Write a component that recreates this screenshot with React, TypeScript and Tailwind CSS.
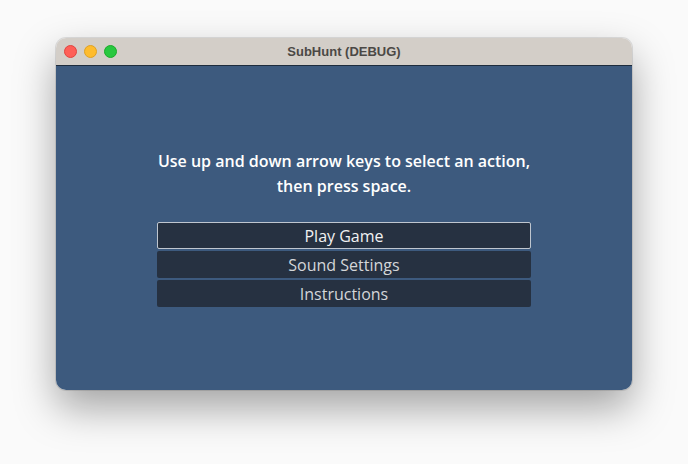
const actions = ['Play Game', 'Sound Settings', 'Instructions'];

export default function App() {
  const selected = 0;

  return (
    <div className="w-[688px] h-[464px] bg-[#fafafa] pt-[38px] pl-[56px]">
      <div className="w-[576px] h-[352px] rounded-[10px] overflow-hidden flex flex-col shadow-[0_18px_40px_rgba(0,0,0,0.35)] ring-1 ring-black/10">
        {/* title bar */}
        <div className="h-[28px] bg-[#d3cec8] flex items-center px-[8px] relative border-b border-[#1e2c3d]">
          <div className="flex gap-[7px]">
            <span className="w-[13px] h-[13px] rounded-full bg-[#fe5f57] border border-[#e0443e]" />
            <span className="w-[13px] h-[13px] rounded-full bg-[#febc2e] border border-[#dea123]" />
            <span className="w-[13px] h-[13px] rounded-full bg-[#28c840] border border-[#1aab29]" />
          </div>
          <div className="absolute inset-0 flex items-center justify-center text-[13px] font-bold text-[#4b4845] font-['Liberation_Sans',Arial,sans-serif]">
            SubHunt (DEBUG)
          </div>
        </div>

        {/* game view */}
        <div className="flex-1 bg-[#3d5a7e] flex flex-col items-center pt-[83px] font-['Open_Sans',sans-serif]">
          <p className="text-[16px] leading-[25px] font-semibold text-white text-center">
            Use up and down arrow keys to select an action,
            <br />
            then press space.
          </p>
          <div className="mt-[23px] w-[374px] flex flex-col gap-[2px]">
            {actions.map((label, i) => (
              <div
                key={label}
                className={
                  i === selected
                    ? 'h-[27px] flex items-center justify-center bg-[#263141] border border-[#bfc6cf] rounded-[2px] text-[16px] font-medium text-[#f2f2f2]'
                    : 'h-[27px] flex items-center justify-center bg-[#263141] rounded-[2px] text-[16px] font-medium text-[#d4d6d9]'
                }
              >
                {label}
              </div>
            ))}
          </div>
        </div>
      </div>
    </div>
  );
}
